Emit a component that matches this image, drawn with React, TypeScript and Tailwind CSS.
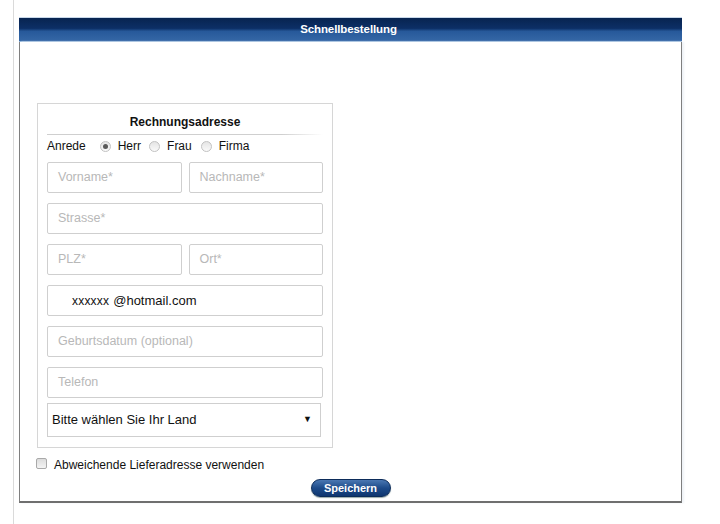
const font = "font-['Liberation_Sans',Arial,sans-serif]";

const Field = ({ placeholder, className = "" }: { placeholder: string; className?: string }) => (
  <div
    className={`h-[31px] border border-[#cfcfcf] rounded-[2px] flex items-center pl-[10px] text-[12.5px] text-[#b8b8b8] bg-white ${className}`}
  >
    {placeholder}
  </div>
);

const Radio = ({ checked = false }: { checked?: boolean }) => (
  <span className="w-[11px] h-[11px] rounded-full border border-[#c2c2c2] bg-[linear-gradient(to_bottom,#e4e4e4,#fafafa)] flex items-center justify-center">
    {checked && <span className="w-[5px] h-[5px] rounded-full bg-[#5a5a5a]" />}
  </span>
);

export default function App() {
  return (
    <div className={`w-[720px] h-[524px] bg-white pl-[13px] ${font}`}>
      <div className="h-full border-l border-[#dadada] pl-[5px] pt-[17px]">
        <div className="w-[663px]">
          {/* Header */}
          <div className="h-[25px] border-t border-[#c8d8ea] border-b border-b-[#8eb2d8] bg-[linear-gradient(to_bottom,#082450_0%,#0c2f66_45%,#27599a_58%,#3567a6_100%)] flex items-center justify-center">
            <span className="text-white font-bold text-[11.5px] tracking-[-0.1px] pr-[4px]">Schnellbestellung</span>
          </div>

          {/* Body */}
          <div className="h-[461px] border-x border-[#7f7f7f] border-b-2 border-b-[#6f6f6f] shadow-[2px_0_2px_#eef2f6] pt-[61px]">
            <div className="ml-[17px] w-[296px] h-[345px] border border-[#d6d6d6] px-[9px]">
              {/* Title */}
              <div className="h-[30px] pt-[9px] text-center text-[12px] font-bold text-[#111]">Rechnungsadresse</div>
              <div className="h-px bg-[linear-gradient(to_right,#cfcfcf_85%,transparent)]" />

              {/* Anrede */}
              <div className="mt-[3px] h-[16px] flex items-center text-[12px] text-[#111]">
                <span>Anrede</span>
                <span className="ml-[14px]"><Radio checked /></span>
                <span className="ml-[7px]">Herr</span>
                <span className="ml-[8px]"><Radio /></span>
                <span className="ml-[7px]">Frau</span>
                <span className="ml-[9px]"><Radio /></span>
                <span className="ml-[7px]">Firma</span>
              </div>

              {/* Inputs */}
              <div className="mt-[8px] flex flex-col gap-[10px]">
                <div className="grid grid-cols-2 gap-[7px]">
                  <Field placeholder="Vorname*" />
                  <Field placeholder="Nachname*" />
                </div>
                <Field placeholder="Strasse*" />
                <div className="grid grid-cols-2 gap-[7px]">
                  <Field placeholder="PLZ*" />
                  <Field placeholder="Ort*" />
                </div>
                <div className="h-[31px] border border-[#cfcfcf] rounded-[2px] flex items-center pl-[24px] text-[13px] text-[#111]">
                  <span className="text-[12px] tracking-[0.2px]">xxxxxx</span>
                  <span className="ml-[4px]">@hotmail.com</span>
                </div>
                <Field placeholder="Geburtsdatum (optional)" />
                <Field placeholder="Telefon" />
              </div>

              {/* Country select */}
              <div className="mt-[5px] w-[274px] h-[34px] border border-[#cfcfcf] flex items-center justify-between pl-[4px] pr-[8px] text-[13px] text-[#111]">
                <span>Bitte wählen Sie Ihr Land</span>
                <span className="text-[9px]">▼</span>
              </div>
            </div>

            {/* Checkbox */}
            <div className="mt-[8px] ml-[16px] h-[14px] flex items-center text-[12px] text-[#111]">
              <span className="w-[11px] h-[11px] rounded-[2px] border border-[#a9a9a9] bg-[linear-gradient(to_bottom,#dcdcdc,#f4f4f4)]" />
              <span className="ml-[7px] mt-[3px]">Abweichende Lieferadresse verwenden</span>
            </div>

            {/* Save */}
            <div className="mt-[9px] flex justify-center">
              <button className="w-[80px] h-[18px] rounded-full border border-[#0c2c5a] bg-[linear-gradient(to_bottom,#4a77b2_0%,#1d4b8a_50%,#0f3670_100%)] text-white font-bold text-[11px] leading-none shadow-[0_1px_1px_#9aa]">
                Speichern
              </button>
            </div>
          </div>
        </div>
      </div>
    </div>
  );
}
